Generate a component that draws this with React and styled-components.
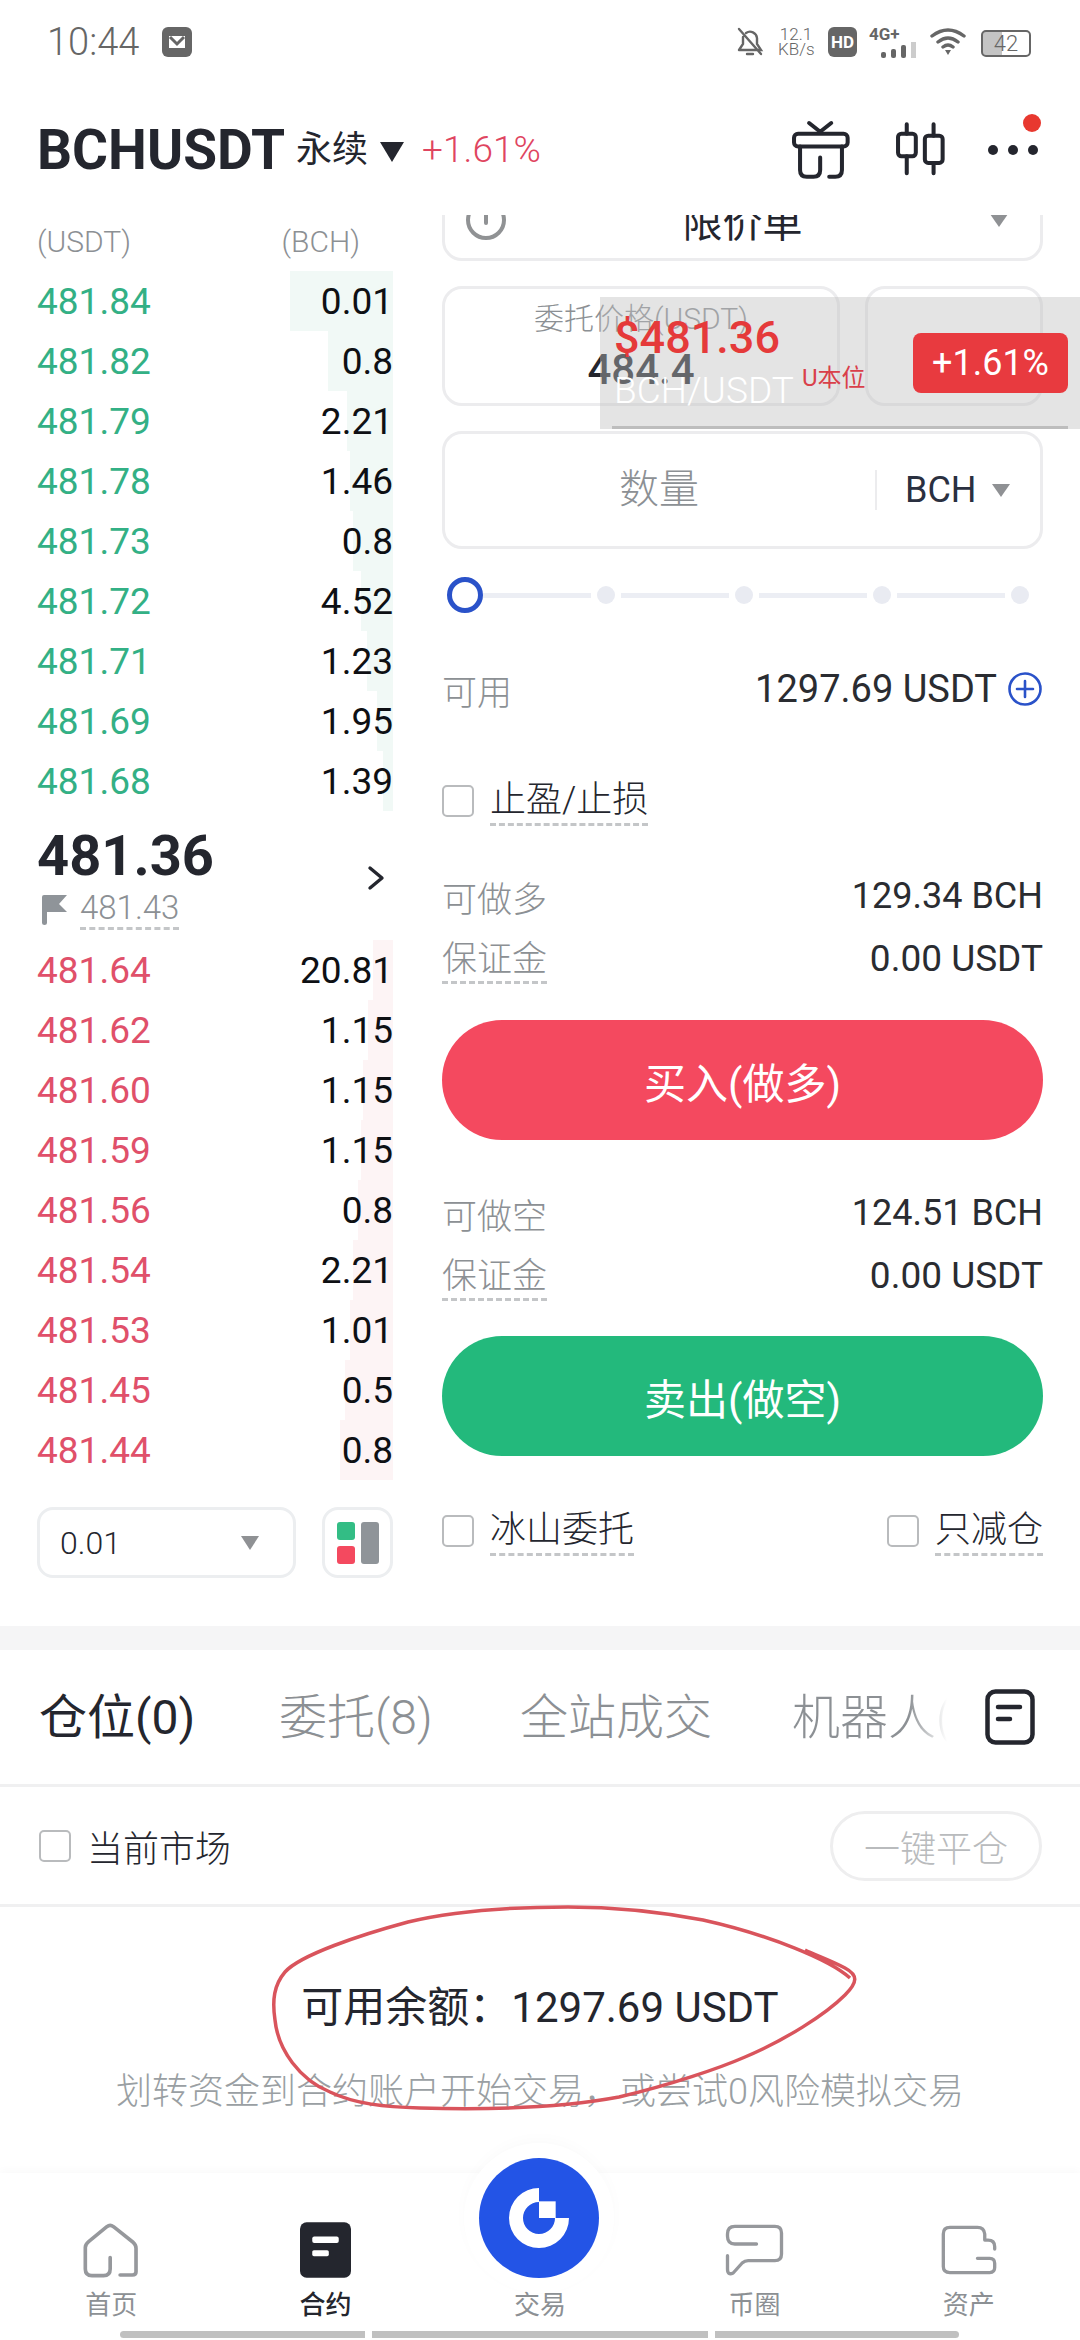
import React from "react";
import styled, { createGlobalStyle } from "styled-components";

const GlobalStyle = createGlobalStyle`
  html, body {
    margin: 0;
    padding: 0;
    background: #fff;
  }
  * {
    box-sizing: border-box;
  }
  body {
    font-family: Roboto, "Noto Sans CJK SC", sans-serif;
    color: #24262e;
  }
`;

const asks = [
  ["481.84", "0.01", 103],
  ["481.82", "0.8", 65],
  ["481.79", "2.21", 46],
  ["481.78", "1.46", 43],
  ["481.73", "0.8", 40],
  ["481.72", "4.52", 32],
  ["481.71", "1.23", 26],
  ["481.69", "1.95", 16],
  ["481.68", "1.39", 10],
];

const bids = [
  ["481.64", "20.81", 20],
  ["481.62", "1.15", 25],
  ["481.60", "1.15", 30],
  ["481.59", "1.15", 32],
  ["481.56", "0.8", 35],
  ["481.54", "2.21", 40],
  ["481.53", "1.01", 43],
  ["481.45", "0.5", 48],
  ["481.44", "0.8", 53],
];

const Page = styled.div`
  position: relative;
  width: 1080px;
  height: 2340px;
  overflow: hidden;
  background: #fff;
  display: flex;
  flex-direction: column;
`;

/* status bar */
const StatusBar = styled.div`
  height: 84px;
  padding: 27px 49px 0 47px;
  display: flex;
  align-items: flex-start;
  color: #666;
`;
const Clock = styled.span`
  font-size: 38px;
  font-weight: 300;
  line-height: 30px;
  margin-right: 23px;
`;
const StatusRight = styled.div`
  margin-left: auto;
  display: flex;
  align-items: flex-start;
`;
const NetSpeed = styled.div`
  width: 36px;
  margin: 0 14px;
  font-size: 17px;
  line-height: 15px;
  text-align: center;
  font-weight: 300;
`;
const HdBadge = styled.span`
  width: 29px;
  height: 30px;
  margin-right: 12px;
  border-radius: 6px;
  background: #666;
  color: #fff;
  font-size: 17px;
  font-weight: 700;
  line-height: 30px;
  text-align: center;
`;
const Signal = styled.div`
  width: 50px;
  margin-right: 10px;
  font-size: 17px;
  font-weight: 700;
  line-height: 15px;
`;
const SignalBars = styled.svg`
  display: block;
  margin-left: 12px;
`;
const Battery = styled.div`
  width: 50px;
  height: 27px;
  margin: 3px 0 0 14px;
  border: 2px solid #666;
  border-radius: 5px;
  font-size: 22px;
  font-weight: 300;
  line-height: 23px;
  text-align: center;
  background: linear-gradient(90deg, #c4c4c4 42%, transparent 42%);
`;

/* header */
const Header = styled.header`
  height: 131px;
  padding: 0 42px 0 37px;
  display: flex;
  align-items: center;
`;
const Symbol = styled.h1`
  margin: 0 11px 0 0;
  font-size: 55px;
  font-weight: 700;
  color: #24262e;
`;
const Perp = styled.span`
  margin: -8px 12px 0 0;
  font-size: 36px;
`;
const Caret = styled.i`
  display: inline-block;
  flex: none;
  width: 0;
  height: 0;
  border-left: ${(p) => p.$w / 2}px solid transparent;
  border-right: ${(p) => p.$w / 2}px solid transparent;
  border-top: ${(p) => p.$h}px solid ${(p) => p.$color || "#8f9194"};
`;
const TitleCaret = styled(Caret)`
  margin-top: 4px;
`;
const Change = styled.span`
  margin-left: 18px;
  font-size: 37px;
  font-weight: 300;
  color: #df4560;
`;
const HeaderIcons = styled.div`
  position: relative;
  margin-left: auto;
  display: flex;
  align-items: center;
  gap: 42px;
`;
const RedDot = styled.span`
  position: absolute;
  right: -3px;
  top: -5px;
  width: 18px;
  height: 18px;
  border-radius: 50%;
  background: #e8382f;
`;

/* trade area */
const Main = styled.main`
  height: 1411px;
  padding: 0 37px;
  display: grid;
  grid-template-columns: 356px 601px;
  column-gap: 49px;
  overflow: hidden;
`;
const Book = styled.section`
  display: flex;
  flex-direction: column;
`;
const BookHead = styled.div`
  height: 56px;
  padding: 0 33px 4px 0;
  display: flex;
  justify-content: space-between;
  align-items: center;
  font-size: 30px;
  font-weight: 300;
  color: #8c9094;
`;
const Row = styled.div`
  height: 60px;
  display: flex;
  justify-content: space-between;
  align-items: center;
  font-size: 37px;
  background: linear-gradient(
    to left,
    ${(p) => (p.$side === "ask" ? "#f1f9f6" : "#fdf4f5")} ${(p) => p.$depth}px,
    transparent ${(p) => p.$depth}px
  );
`;
const Price = styled.span`
  color: ${(p) => (p.$side === "ask" ? "#33b085" : "#e0506a")};
`;
const Amount = styled.span`
  color: #0e1014;
`;
const Mid = styled.div`
  height: 129px;
  padding-top: 5px;
  display: flex;
  justify-content: space-between;
  align-items: center;
`;
const MidPrice = styled.div`
  font-size: 56px;
  font-weight: 700;
  line-height: 61px;
  color: #24262e;
`;
const MarkRow = styled.div`
  margin-top: 2px;
  display: flex;
  align-items: center;
  gap: 12px;
  padding-left: 5px;
`;
const MarkPrice = styled.span`
  font-size: 33px;
  line-height: 38px;
  font-weight: 300;
  color: #8c9094;
  border-bottom: 3px dashed #c4c6c8;
`;
const Chevron = styled.svg`
  margin-right: 8px;
`;
const BookFoot = styled.div`
  margin-top: 27px;
  display: flex;
  gap: 26px;
`;
const StepSelect = styled.div`
  width: 260px;
  height: 71px;
  padding: 0 34px 0 20px;
  display: flex;
  justify-content: space-between;
  align-items: center;
  border: 3px solid #eceef0;
  border-radius: 16px;
  font-size: 32px;
  font-weight: 300;
`;
const LayoutToggle = styled.div`
  width: 71px;
  height: 71px;
  border: 3px solid #eceef0;
  border-radius: 16px;
  display: flex;
  align-items: center;
  justify-content: center;
`;

/* order form */
const Form = styled.section`
  display: flex;
  flex-direction: column;
`;
const Field = styled.div`
  height: ${(p) => p.$h}px;
  border: 3px solid #ececee;
  border-radius: 20px;
  display: flex;
  align-items: center;
`;
const TypeField = styled(Field)`
  margin-top: -36px;
  padding: 0 32px 0 20px;
  justify-content: space-between;
  font-size: 40px;
`;
const TypeName = styled.span`
  margin-right: 12px;
`;
const PriceRow = styled.div`
  margin: 25px 0;
  display: grid;
  grid-template-columns: 398px 178px;
  column-gap: 25px;
`;
const PriceField = styled(Field)`
  flex-direction: column;
  justify-content: center;
`;
const FieldLabel = styled.span`
  font-size: 30px;
  line-height: 40px;
  font-weight: 300;
  color: #8c9094;
`;
const FieldValue = styled.span`
  margin-top: 7px;
  font-size: 42px;
  line-height: 48px;
  font-weight: 500;
  color: #24262e;
`;
const Placeholder = styled.span`
  flex: 1;
  padding-left: 174px;
  font-size: 40px;
  font-weight: 300;
  color: #8c9094;
  line-height: 112px;
`;
const UnitPicker = styled.div`
  width: 165px;
  height: 40px;
  padding: 0 30px 0 28px;
  border-left: 2px solid #ececee;
  display: flex;
  justify-content: space-between;
  align-items: center;
  font-size: 36px;
  color: #2a3040;
`;
const Slider = styled.div`
  height: 92px;
  padding: 0 14px 0 5px;
  display: flex;
  align-items: center;
  gap: 6px;
`;
const Knob = styled.span`
  width: 36px;
  height: 36px;
  margin-right: -6px;
  border: 5px solid #2a52c9;
  border-radius: 50%;
  flex: none;
`;
const Track = styled.span`
  flex: 1;
  height: 5px;
  background: #eceef4;
`;
const Stop = styled.span`
  width: 18px;
  height: 18px;
  border-radius: 50%;
  background: #e9ebf2;
  flex: none;
`;
const InfoRow = styled.div`
  height: ${(p) => p.$h || 62}px;
  margin-top: ${(p) => p.$mt || 0}px;
  display: flex;
  justify-content: space-between;
  align-items: center;
  font-size: 35px;
`;
const Muted = styled.span`
  font-weight: 300;
  color: #8c9094;
  ${(p) => p.$dashed && "margin-top: 6px; border-bottom: 3px dashed #c4c6c8; line-height: 42px;"}
`;
const Value = styled.span`
  font-size: ${(p) => p.$size || 36}px;
  font-weight: 400;
  color: #2a2c31;
  display: inline-flex;
  align-items: center;
  gap: 10px;
`;
const CheckGroup = styled.label`
  display: inline-flex;
  align-items: center;
  gap: 16px;
`;
const Box = styled.span`
  width: 32px;
  height: 32px;
  border: 2px solid #b9bbbd;
  border-radius: 5px;
  flex: none;
`;
const DashedText = styled.span`
  font-size: 36px;
  font-weight: 300;
  line-height: 46px;
  border-bottom: 3px dashed #c4c6c8;
`;
const ActionButton = styled.button`
  width: 100%;
  height: 120px;
  margin: ${(p) => p.$mt}px 0 ${(p) => p.$mb}px;
  padding: 0;
  border: none;
  border-radius: 60px;
  background: ${(p) => p.$color};
  color: #fff;
  font: 400 42px Roboto, "Noto Sans CJK SC", sans-serif;
`;

/* positions */
const Band = styled.div`
  height: 24px;
  background: #f5f5f6;
`;
const Tabs = styled.nav`
  height: 137px;
  padding: 0 45px 0 39px;
  display: flex;
  align-items: center;
  border-bottom: 3px solid #f0f0f1;
  font-size: 48px;
  font-weight: 300;
`;
const Tab = styled.span`
  flex: none;
  width: ${(p) => p.$w}px;
  margin-top: -8px;
  color: ${(p) => (p.$active ? "#24262e" : "#8c9094")};
  font-weight: ${(p) => (p.$active ? 400 : 300)};
`;
const FadeTab = styled(Tab)`
  overflow: hidden;
  white-space: nowrap;
  background: linear-gradient(90deg, #8c9094 75%, #fff 100%);
  -webkit-background-clip: text;
  background-clip: text;
  color: transparent;
`;
const TabIcon = styled.span`
  margin-left: auto;
  display: flex;
`;
const FilterRow = styled.div`
  height: 120px;
  padding: 0 38px 0 39px;
  display: flex;
  justify-content: space-between;
  align-items: center;
  border-bottom: 3px solid #f0f0f1;
  font-size: 36px;
  font-weight: 300;
`;
const OutlineButton = styled.span`
  width: 212px;
  height: 70px;
  border: 3px solid #eeeeef;
  border-radius: 35px;
  display: flex;
  align-items: center;
  justify-content: center;
  color: #b9bbbd;
`;
const Empty = styled.div`
  height: 266px;
  padding-top: 73px;
  text-align: center;
`;
const Balance = styled.div`
  font-size: 42px;
  line-height: 56px;
  color: #24262e;
`;
const Hint = styled.div`
  margin-top: 31px;
  font-size: 36px;
  line-height: 50px;
  font-weight: 300;
  color: #9a9fa3;
`;

/* bottom nav */
const BottomBar = styled.div`
  position: relative;
  flex: 1;
  display: flex;
  flex-direction: column;
  box-shadow: 0 -3px 8px rgba(0, 0, 0, 0.025);
`;
const NavList = styled.div`
  display: grid;
  grid-template-columns: repeat(5, 1fr);
  padding: 49px 4px 0;
`;
const NavItem = styled.div`
  display: flex;
  flex-direction: column;
  align-items: center;
  font-size: 26px;
  font-weight: ${(p) => (p.$active ? 500 : 400)};
  color: ${(p) => (p.$active ? "#24262e" : "#8c9094")};
`;
const NavIcon = styled.div`
  height: 56px;
  display: flex;
  align-items: center;
  justify-content: center;
`;
const NavLabel = styled.span`
  margin-top: 12px;
  line-height: 30px;
`;
const TradeButton = styled.div`
  position: absolute;
  left: 479px;
  top: -15px;
  width: 120px;
  height: 120px;
  border-radius: 50%;
  box-shadow: 0 0 0 15px #fff, 0 -4px 14px 15px rgba(0, 0, 0, 0.02);
`;
const HomeIndicator = styled.div`
  margin: 11px 0 0 120px;
  display: grid;
  grid-template-columns: 245px 336px 244px;
  column-gap: 7px;
`;
const IndicatorPart = styled.span`
  height: 7px;
  background: #c0c0c0;
  border-radius: ${(p) => p.$radius};
`;

/* floating price ticker */
const Ticker = styled.div`
  position: absolute;
  left: 600px;
  top: 297px;
  width: 480px;
  height: 132px;
  padding: 16px 12px 0 14px;
  display: flex;
  background: rgba(190, 190, 190, 0.42);
  &::after {
    content: "";
    position: absolute;
    left: 12px;
    right: 12px;
    bottom: 0;
    height: 3px;
    background: #bdbdbd;
  }
`;
const TickerMain = styled.div`
  width: 188px;
  flex: none;
`;
const TickerPrice = styled.div`
  font-size: 45px;
  line-height: 50px;
  font-weight: 500;
  color: #e53a3a;
`;
const TickerName = styled.div`
  margin-top: 6px;
  font-size: 37px;
  line-height: 44px;
  font-weight: 300;
  color: #fff;
`;
const TickerTag = styled.span`
  margin-top: 50px;
  font-size: 24px;
  line-height: 30px;
  color: #d9404a;
`;
const TickerBadge = styled.span`
  margin: 20px 0 0 auto;
  width: 155px;
  height: 60px;
  border-radius: 8px;
  background: #e83a3f;
  color: #fff;
  font-size: 36px;
  line-height: 60px;
  text-align: center;
`;
const Scribble = styled.svg`
  position: absolute;
  left: 0;
  top: 0;
  pointer-events: none;
`;

function GiftIcon() {
  return (
    <svg width="62" height="62" viewBox="35 40 185 185" fill="none" stroke="#24262e" strokeWidth="12" strokeLinecap="round" strokeLinejoin="round">
      <path d="M92 52 125 78 158 52" />
      <rect x="47" y="84" width="160" height="38" rx="12" />
      <path d="M65 122V192Q65 212 85 212H105Q125 212 125 192V155" />
      <path d="M190 122V192Q190 212 170 212H152" />
    </svg>
  );
}

function CandleIcon() {
  return (
    <svg width="52" height="57" viewBox="350 50 155 170" fill="none" stroke="#24262e" strokeWidth="12" strokeLinecap="round">
      <path d="M388 60V88M388 155V206M468 60V94M468 175V206" />
      <rect x="362" y="88" width="53" height="67" rx="10" />
      <rect x="442" y="94" width="53" height="81" rx="10" />
    </svg>
  );
}

function DotsIcon() {
  return (
    <svg width="50" height="12" viewBox="0 0 50 12" fill="#24262e">
      <circle cx="5" cy="6" r="5" />
      <circle cx="25" cy="6" r="5" />
      <circle cx="45" cy="6" r="5" />
    </svg>
  );
}

function HomeIcon() {
  return (
    <svg width="58" height="57" viewBox="40 28 175 172" fill="none" stroke="#96989c" strokeWidth="11" strokeLinecap="round" strokeLinejoin="round">
      <path d="M125 135V170Q125 190 105 190H70Q50 190 50 170V105Q50 95 60 87L115 42Q125 35 135 42L195 90Q203 97 203 107V178Q203 188 192 188H155" />
    </svg>
  );
}

function ContractIcon() {
  return (
    <svg width="51" height="56" viewBox="688 33 154 167">
      <rect x="688" y="33" width="154" height="167" rx="20" fill="#24262e" />
      <rect x="725" y="76" width="80" height="19" rx="6" fill="#fff" />
      <rect x="725" y="117" width="50" height="18" rx="5" fill="#fff" />
    </svg>
  );
}

function ChatIcon() {
  return (
    <svg width="61" height="55" viewBox="38 32 182 165" fill="none" stroke="#96989c" strokeWidth="10" strokeLinecap="round" strokeLinejoin="round">
      <path d="M135 95H70Q48 95 48 72V65Q48 42 70 42H190Q210 42 210 62V125Q210 145 190 145H110Q100 145 92 152L65 182Q48 190 48 170V130" />
    </svg>
  );
}

function WalletIcon() {
  return (
    <svg width="58" height="52" viewBox="685 37 175 156" fill="none" stroke="#96989c" strokeWidth="10" strokeLinecap="round" strokeLinejoin="round">
      <path d="M798 140H835Q850 140 850 155V168Q850 183 835 183H715Q695 183 695 165V67Q695 47 715 47H798Q818 47 820 67V85H830Q850 85 850 105V112" />
    </svg>
  );
}

function TradeLogo() {
  return (
    <svg width="120" height="120" viewBox="87 57 360 360">
      <circle cx="267" cy="237" r="180" fill="#2354e6" />
      <path d="M267 147A90 90 0 1 0 357 237H315A48 48 0 1 1 267 189Z" fill="#fff" />
      <rect x="267" y="187" width="50" height="50" fill="#fff" />
    </svg>
  );
}

function App() {
  return (
    <Page>
      <GlobalStyle />
      <StatusBar>
        <Clock>10:44</Clock>
        <svg width="30" height="30" viewBox="0 0 30 30">
          <rect width="30" height="30" rx="6" fill="#666" />
          <path d="M7 9H23V21H7Z" fill="#fff" />
          <path d="M8 10 15 17 22 10" fill="none" stroke="#666" strokeWidth="3" />
        </svg>
        <StatusRight>
          <svg width="28" height="30" viewBox="0 0 28 30" fill="none" stroke="#666" strokeWidth="2.4" strokeLinecap="round">
            <path d="M3 23H25L21 17V11A7 7 0 0 0 10 6M7 10V17L3 23M3 2 25 27M11 27H17" />
          </svg>
          <NetSpeed>
            12.1
            <br />
            KB/s
          </NetSpeed>
          <HdBadge>HD</HdBadge>
          <Signal>
            4G+
            <SignalBars width="38" height="16" viewBox="0 0 38 16" fill="#666">
              <rect x="0" y="10" width="5" height="6" rx="2" />
              <rect x="10" y="7" width="5" height="9" rx="2" />
              <rect x="20" y="3" width="5" height="13" rx="2" />
              <rect x="30" y="0" width="5" height="16" fill="#ccc" />
            </SignalBars>
          </Signal>
          <svg width="38" height="28" viewBox="0 0 38 28" fill="none" stroke="#666" strokeWidth="3.4" strokeLinecap="round">
            <path d="M3 9Q19 -3 35 9M9 15Q19 7 29 15M14 20Q19 16 24 20" />
            <path d="M16 23H22L19 28Z" fill="#666" stroke="none" />
          </svg>
          <Battery>42</Battery>
        </StatusRight>
      </StatusBar>

      <Header>
        <Symbol>BCHUSDT</Symbol>
        <Perp>永续</Perp>
        <TitleCaret $w={24} $h={20} $color="#24262e" />
        <Change>+1.61%</Change>
        <HeaderIcons>
          <GiftIcon />
          <CandleIcon />
          <DotsIcon />
          <RedDot />
        </HeaderIcons>
      </Header>

      <Main>
        <Book>
          <BookHead>
            <span>(USDT)</span>
            <span>(BCH)</span>
          </BookHead>
          {asks.map(([price, amount, depth]) => (
            <Row key={price} $side="ask" $depth={depth}>
              <Price $side="ask">{price}</Price>
              <Amount>{amount}</Amount>
            </Row>
          ))}
          <Mid>
            <div>
              <MidPrice>481.36</MidPrice>
              <MarkRow>
                <svg width="26" height="30" viewBox="0 0 26 30" fill="#8f9499">
                  <path d="M0 2Q0 0 2 0H25L17 9 25 17H5V28Q5 30 2.500 30 0 30 0 28Z" />
                </svg>
                <MarkPrice>481.43</MarkPrice>
              </MarkRow>
            </div>
            <Chevron width="18" height="26" viewBox="0 0 18 26" fill="none" stroke="#24262e" strokeWidth="3.4" strokeLinecap="round" strokeLinejoin="round">
              <path d="M3 3 15 13 3 23" />
            </Chevron>
          </Mid>
          {bids.map(([price, amount, depth]) => (
            <Row key={price} $side="bid" $depth={depth}>
              <Price $side="bid">{price}</Price>
              <Amount>{amount}</Amount>
            </Row>
          ))}
          <BookFoot>
            <StepSelect>
              0.01
              <Caret $w={18} $h={14} />
            </StepSelect>
            <LayoutToggle>
              <svg width="42" height="42" viewBox="0 0 42 42">
                <rect width="18" height="18" rx="3" fill="#33bd85" />
                <rect y="24" width="18" height="18" rx="3" fill="#f4495f" />
                <rect x="24" width="18" height="42" rx="3" fill="#8f9499" />
              </svg>
            </LayoutToggle>
          </BookFoot>
        </Book>

        <Form>
          <TypeField $h={82}>
            <svg width="42" height="42" viewBox="0 0 42 42" fill="none" stroke="#909294" strokeWidth="4" strokeLinecap="round">
              <circle cx="21" cy="21" r="18" />
              <path d="M21 12V24" />
            </svg>
            <TypeName>限价单</TypeName>
            <Caret $w={18} $h={13} />
          </TypeField>
          <PriceRow>
            <PriceField $h={120}>
              <FieldLabel>委托价格(USDT)</FieldLabel>
              <FieldValue>484.4</FieldValue>
            </PriceField>
            <Field $h={120} />
          </PriceRow>
          <Field $h={118}>
            <Placeholder>数量</Placeholder>
            <UnitPicker>
              BCH
              <Caret $w={18} $h={13} />
            </UnitPicker>
          </Field>
          <Slider>
            <Knob />
            <Track />
            <Stop />
            <Track />
            <Stop />
            <Track />
            <Stop />
            <Track />
            <Stop />
          </Slider>
          <InfoRow $h={96}>
            <Muted>可用</Muted>
            <Value $size={38}>
              1297.69 USDT
              <svg width="36" height="36" viewBox="0 0 36 36" fill="none" stroke="#2a52c9" strokeWidth="2.6" strokeLinecap="round">
                <circle cx="18" cy="18" r="15.500" />
                <path d="M18 10V26M10 18H26" />
              </svg>
            </Value>
          </InfoRow>
          <InfoRow $h={128}>
            <CheckGroup>
              <Box />
              <DashedText>止盈/止损</DashedText>
            </CheckGroup>
          </InfoRow>
          <InfoRow>
            <Muted>可做多</Muted>
            <Value>129.34 BCH</Value>
          </InfoRow>
          <InfoRow>
            <Muted $dashed>保证金</Muted>
            <Value $size={37}>0.00 USDT</Value>
          </InfoRow>
          <ActionButton $mt={31} $mb={30} $color="#f4495f">买入(做多)</ActionButton>
          <InfoRow $mt={12}>
            <Muted>可做空</Muted>
            <Value>124.51 BCH</Value>
          </InfoRow>
          <InfoRow>
            <Muted $dashed>保证金</Muted>
            <Value $size={37}>0.00 USDT</Value>
          </InfoRow>
          <ActionButton $mt={30} $mb={28} $color="#23b97c">卖出(做空)</ActionButton>
          <InfoRow $mt={16}>
            <CheckGroup>
              <Box />
              <DashedText>冰山委托</DashedText>
            </CheckGroup>
            <CheckGroup>
              <Box />
              <DashedText>只减仓</DashedText>
            </CheckGroup>
          </InfoRow>
        </Form>
      </Main>

      <Band />
      <Tabs>
        <Tab $w={240} $active>仓位(0)</Tab>
        <Tab $w={241}>委托(8)</Tab>
        <Tab $w={272}>全站成交</Tab>
        <FadeTab $w={155}>机器人(0)</FadeTab>
        <TabIcon>
          <svg width="50" height="56" viewBox="0 0 50 56" fill="none" stroke="#24262e" strokeWidth="4.500">
            <rect x="2.500" y="2.500" width="45" height="51" rx="8" />
            <path d="M13 18H35M13 30H25" strokeLinecap="round" />
          </svg>
        </TabIcon>
      </Tabs>
      <FilterRow>
        <CheckGroup>
          <Box />
          <span>当前市场</span>
        </CheckGroup>
        <OutlineButton>一键平仓</OutlineButton>
      </FilterRow>
      <Empty>
        <Balance>可用余额：1297.69 USDT</Balance>
        <Hint>划转资金到合约账户开始交易，或尝试0风险模拟交易</Hint>
      </Empty>

      <BottomBar>
        <NavList>
          <NavItem>
            <NavIcon><HomeIcon /></NavIcon>
            <NavLabel>首页</NavLabel>
          </NavItem>
          <NavItem $active>
            <NavIcon><ContractIcon /></NavIcon>
            <NavLabel>合约</NavLabel>
          </NavItem>
          <NavItem>
            <NavIcon />
            <NavLabel>交易</NavLabel>
          </NavItem>
          <NavItem>
            <NavIcon><ChatIcon /></NavIcon>
            <NavLabel>币圈</NavLabel>
          </NavItem>
          <NavItem>
            <NavIcon><WalletIcon /></NavIcon>
            <NavLabel>资产</NavLabel>
          </NavItem>
        </NavList>
        <TradeButton><TradeLogo /></TradeButton>
        <HomeIndicator>
          <IndicatorPart $radius="4px 0 0 4px" />
          <IndicatorPart $radius="0" />
          <IndicatorPart $radius="0 4px 4px 0" />
        </HomeIndicator>
      </BottomBar>

      <Ticker>
        <TickerMain>
          <TickerPrice>$481.36</TickerPrice>
          <TickerName>BCH/USDT</TickerName>
        </TickerMain>
        <TickerTag>U本位</TickerTag>
        <TickerBadge>+1.61%</TickerBadge>
      </Ticker>

      <Scribble width="1080" height="2340" viewBox="0 0 1080 2340" fill="none" stroke="#d9545c" strokeWidth="3.5">
        <path d="M850 1978C830 1960 770 1935 703 1920C650 1910 610 1907 568 1907C510 1907 450 1912 408 1922C360 1935 300 1955 285 1972C274 1985 272 2000 275 2020C278 2050 300 2080 330 2092C355 2104 385 2107 420 2108C490 2110 560 2108 619 2097C670 2085 720 2068 745 2057C785 2040 825 2015 845 1995C858 1982 858 1975 845 1968C830 1960 815 1955 805 1950" />
      </Scribble>
    </Page>
  );
}

export default App;
